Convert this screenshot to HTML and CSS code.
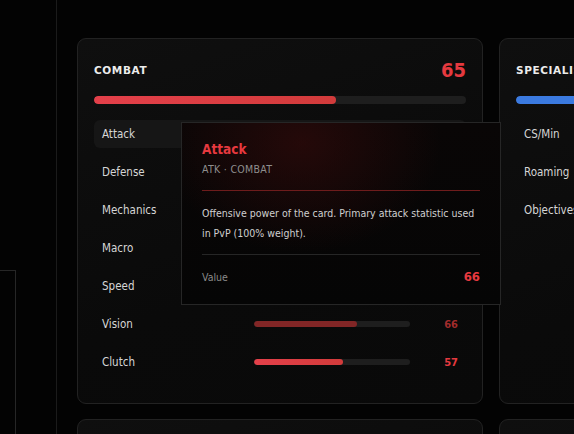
FILE: index.html
```html
<!DOCTYPE html>
<html>
<head>
<meta charset="utf-8">
<link rel="stylesheet" href="styles.css">
</head>
<body>
<div class="app">
  <aside class="sidebar"><div class="side-box"></div></aside>
  <main class="main">
    <div class="grid">
      <section class="card">
        <div class="card-head">
          <h2 class="card-title">COMBAT</h2>
          <span class="card-score red">65</span>
        </div>
        <div class="track big"><div class="fill red-fill" style="width:65%"></div></div>
        <ul class="rows">
          <li class="row active"><span class="label">Attack</span><div class="track small"><div class="fill red-fill" style="width:66%"></div></div><span class="num red">66</span></li>
          <li class="row"><span class="label">Defense</span><div class="track small"><div class="fill red-fill" style="width:60%"></div></div><span class="num red">60</span></li>
          <li class="row"><span class="label">Mechanics</span><div class="track small"><div class="fill red-fill" style="width:70%"></div></div><span class="num red">70</span></li>
          <li class="row"><span class="label">Macro</span><div class="track small"><div class="fill red-fill" style="width:64%"></div></div><span class="num red">64</span></li>
          <li class="row"><span class="label">Speed</span><div class="track small"><div class="fill red-fill" style="width:68%"></div></div><span class="num red">68</span></li>
          <li class="row"><span class="label">Vision</span><div class="track small"><div class="fill dark-fill" style="width:66%"></div></div><span class="num dark">66</span></li>
          <li class="row"><span class="label">Clutch</span><div class="track small"><div class="fill red-fill" style="width:57%"></div></div><span class="num red">57</span></li>
        </ul>
      </section>
      <section class="card">
        <div class="card-head">
          <h2 class="card-title">SPECIALIST</h2>
          <span class="card-score blue">70</span>
        </div>
        <div class="track big"><div class="fill blue-fill" style="width:70%"></div></div>
        <ul class="rows">
          <li class="row"><span class="label">CS/Min</span></li>
          <li class="row"><span class="label">Roaming</span></li>
          <li class="row"><span class="label">Objectives</span></li>
        </ul>
      </section>
      <section class="card"></section>
      <section class="card"></section>
    </div>
    <div class="tooltip">
      <div class="tip-title">Attack</div>
      <div class="tip-sub">ATK · COMBAT</div>
      <div class="tip-rule"></div>
      <p class="tip-desc">Offensive power of the card. Primary attack statistic used in PvP (100% weight).</p>
      <div class="tip-foot"><span class="tip-label">Value</span><span class="tip-val">66</span></div>
    </div>
  </main>
</div>
</body>
</html>
```
FILE: styles.css
```css
* { box-sizing: border-box; }
html, body { margin: 0; padding: 0; }
body {
  background: #030303;
  font-family: "Liberation Sans Narrow", "DejaVu Sans Condensed", "Liberation Sans", sans-serif;
  color: #d8d8d8;
  width: 574px;
  height: 434px;
  overflow: hidden;
}
.app { display: flex; height: 434px; overflow: hidden; }
.sidebar {
  width: 57px;
  flex: none;
  border-right: 1px solid #1b1b1b;
  padding-top: 270px;
}
.side-box {
  width: 16px;
  height: 164px;
  border-top: 1px solid #262626;
  border-right: 1px solid #262626;
}
.main {
  position: relative;
  flex: 1;
  min-width: 0;
  overflow: hidden;
  padding: 38px 0 0 20px;
}
.grid {
  display: grid;
  grid-template-columns: 406px 406px;
  grid-auto-rows: 366px;
  gap: 15px 16px;
}
.card {
  border: 1px solid #222;
  border-radius: 9px;
  background: linear-gradient(160deg, #0f0f0f 0%, #0a0a0a 60%, #090909 100%);
  padding: 16px;
}
.card-head {
  display: flex;
  align-items: center;
  justify-content: space-between;
  height: 30px;
}
.card-title {
  margin: 0;
  font-family: "DejaVu Sans", sans-serif;
  font-weight: bold;
  font-size: 10.5px;
  letter-spacing: 0.6px;
  color: #ececec;
  white-space: nowrap;
}
.card-score {
  font-family: "DejaVu Sans Condensed", "DejaVu Sans", sans-serif;
  font-weight: bold;
  font-size: 20px;
}
.red { color: #e5393f; }
.blue { color: #3b7ae0; }
.dark { color: #a12c2c; }
.track {
  background: #1e1e1e;
  border-radius: 4px;
  overflow: hidden;
}
.track.big { height: 8px; margin-top: 11px; }
.track.small { width: 156px; height: 6px; border-radius: 3px; }
.fill { height: 100%; border-radius: inherit; }
.red-fill { background: linear-gradient(90deg, #e4404a, #d23b3b); }
.dark-fill { background: #822626; }
.blue-fill { background: #3b7ae0; }
.rows {
  list-style: none;
  margin: 16px 0 0;
  padding: 0;
  display: flex;
  flex-direction: column;
  gap: 10px;
}
.row {
  height: 28px;
  display: flex;
  align-items: center;
  padding: 0 8px;
  border-radius: 6px;
  font-size: 11.5px;
  color: #d6d6d6;
  white-space: nowrap;
}
.row.active { background: #161616; }
.label { flex: 1; }
.num {
  width: 48px;
  text-align: right;
  font-family: "DejaVu Sans Condensed", sans-serif;
  font-weight: bold;
  font-size: 11px;
}
.tooltip {
  position: absolute;
  left: 124px;
  top: 122px;
  width: 320px;
  height: 183px;
  border: 1px solid #262626;
  background:
    radial-gradient(ellipse 140px 110px at 120px 20px, rgba(60, 12, 12, 0.55), rgba(0,0,0,0) 100%),
    linear-gradient(180deg, #090606, #050505);
  padding: 17px 20px 0 20px;
}
.tip-title {
  font-family: "DejaVu Sans Condensed", sans-serif;
  font-weight: bold;
  font-size: 13.5px;
  color: #e5393f;
  line-height: 18px;
}
.tip-sub {
  margin-top: 4px;
  font-size: 10.5px;
  color: #8e8e8e;
  letter-spacing: 0.3px;
  line-height: 14px;
}
.tip-rule {
  margin-top: 14px;
  height: 1px;
  background: #6e1c1c;
}
.tip-desc {
  margin: 12px 0 0;
  font-size: 10.5px;
  line-height: 20px;
  color: #cfcfcf;
}
.tip-foot {
  margin-top: 11px;
  border-top: 1px solid #262626;
  padding-top: 14px;
  display: flex;
  justify-content: space-between;
  align-items: center;
}
.tip-label { font-size: 10.5px; color: #8a8a8a; }
.tip-val {
  font-family: "DejaVu Sans Condensed", sans-serif;
  font-weight: bold;
  font-size: 13px;
  color: #e5393f;
}
```
